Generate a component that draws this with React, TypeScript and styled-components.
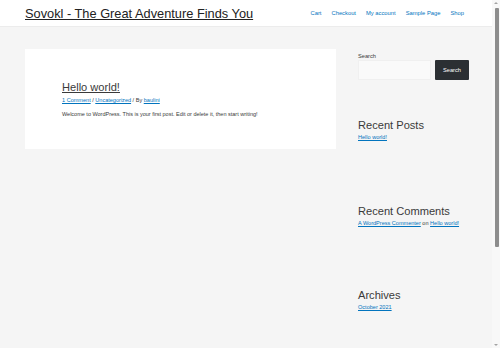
import React, { FC } from "react"
import styled, { createGlobalStyle } from "styled-components"

const COLORS = {
  page: "#f5f5f5",
  white: "#ffffff",
  text: "#3a3a3a",
  link: "#0274be",
  button: "#2b2f33",
}

const GlobalStyle = createGlobalStyle`
  html, body {
    margin: 0;
    padding: 0;
    background: ${COLORS.page};
    font-family: "Liberation Sans", Arial, sans-serif;
    color: ${COLORS.text};
  }
`

const Frame = styled.div`
  display: flex;
  width: 500px;
  height: 348px;
  overflow: hidden;
`

const Page = styled.div`
  flex: 1;
  display: flex;
  flex-flow: column;
  min-width: 0;
`

const Header = styled.header`
  height: 26px;
  flex-shrink: 0;
  background: ${COLORS.white};
  border-bottom: 1px solid #ececec;
  display: flex;
  align-items: center;
  justify-content: space-between;
  padding: 0 28px 0 25px;
`

const SiteTitle = styled.a`
  font-size: 12.8px;
  color: #222;
  text-decoration: underline;
  margin-top: 1px;
`

const Nav = styled.nav`
  display: flex;
  gap: 10px;
`

const NavLink = styled.a`
  font-size: 5.8px;
  color: ${COLORS.link};
  text-decoration: none;
`

const Main = styled.div`
  display: flex;
  align-items: flex-start;
  gap: 22px;
  padding: 22px 0 0 25px;
`

const Card = styled.article`
  width: 311px;
  height: 100px;
  box-sizing: border-box;
  background: ${COLORS.white};
  padding: 30px 37px;
`

const PostTitle = styled.h2`
  margin: 0;
  font-size: 11.1px;
  font-weight: normal;
  color: ${COLORS.text};
  text-decoration: underline;
  line-height: 16px;
`

const Meta = styled.div`
  font-size: 5.55px;
  margin: 2px 0 8px;
  color: ${COLORS.text};
`

const Link = styled.a`
  color: ${COLORS.link};
  text-decoration: underline;
`

const Body = styled.p`
  margin: 0;
  font-size: 5.5px;
  color: ${COLORS.text};
`

const Sidebar = styled.aside`
  width: 111px;
  display: flex;
  flex-flow: column;
  padding-top: 4px;
`

const SearchLabel = styled.label`
  font-size: 5.7px;
  margin-bottom: 1px;
`

const SearchRow = styled.div`
  display: flex;
  gap: 4px;
  align-items: stretch;
  height: 20px;
`

const SearchInput = styled.div`
  width: 73px;
  background: #fafafa;
  border: 1px solid #f0f0f0;
  box-sizing: border-box;
`

const SearchButton = styled.div`
  width: 34px;
  background: ${COLORS.button};
  color: ${COLORS.white};
  font-size: 5.7px;
  display: flex;
  align-items: center;
  justify-content: center;
  border-radius: 1px;
`

const Widget = styled.section<{ $top: number }>`
  margin-top: ${p => p.$top}px;
`

const WidgetTitle = styled.h3`
  margin: 0;
  font-size: 11.1px;
  font-weight: normal;
  line-height: 14px;
  color: ${COLORS.text};
`

const WidgetText = styled.div`
  font-size: 5.55px;
  margin-top: 2px;
`

const Scrollbar = styled.div`
  width: 8px;
  flex-shrink: 0;
  background: #f8f8f8;
  display: flex;
  flex-flow: column;
  align-items: center;
`

const Arrow = styled.div<{ $down?: boolean }>`
  width: 0;
  height: 0;
  border-left: 2px solid transparent;
  border-right: 2px solid transparent;
  ${p => (p.$down ? "border-top" : "border-bottom")}: 2px solid #a3a3a3;
  margin: 2px 0;
`

const Thumb = styled.div`
  width: 4px;
  height: 239px;
  margin-left: 2px;
  background: #8d8d8d;
  border-radius: 1px;
`

const Track = styled.div`
  flex: 1;
  display: flex;
  flex-flow: column;
  align-items: center;
  padding-top: 2px;
`

const NAV = ["Cart", "Checkout", "My account", "Sample Page", "Shop"]

const App: FC = () => {
  return (
    <Frame>
      <GlobalStyle />
      <Page>
        <Header>
          <SiteTitle>Sovokl - The Great Adventure Finds You</SiteTitle>
          <Nav>
            {NAV.map(item => (
              <NavLink key={item}>{item}</NavLink>
            ))}
          </Nav>
        </Header>
        <Main>
          <Card>
            <PostTitle>Hello world!</PostTitle>
            <Meta>
              <Link>1 Comment</Link> / <Link>Uncategorized</Link> / By{" "}
              <Link>baulini</Link>
            </Meta>
            <Body>
              Welcome to WordPress. This is your first post. Edit or delete it,
              then start writing!
            </Body>
          </Card>
          <Sidebar>
            <SearchLabel>Search</SearchLabel>
            <SearchRow>
              <SearchInput />
              <SearchButton>Search</SearchButton>
            </SearchRow>
            <Widget $top={38}>
              <WidgetTitle>Recent Posts</WidgetTitle>
              <WidgetText>
                <Link>Hello world!</Link>
              </WidgetText>
            </Widget>
            <Widget $top={64}>
              <WidgetTitle>Recent Comments</WidgetTitle>
              <WidgetText>
                <Link>A WordPress Commenter</Link> on <Link>Hello world!</Link>
              </WidgetText>
            </Widget>
            <Widget $top={62}>
              <WidgetTitle>Archives</WidgetTitle>
              <WidgetText>
                <Link>October 2021</Link>
              </WidgetText>
            </Widget>
          </Sidebar>
        </Main>
      </Page>
      <Scrollbar>
        <Arrow />
        <Track>
          <Thumb />
        </Track>
        <Arrow $down />
      </Scrollbar>
    </Frame>
  )
}

export default App
